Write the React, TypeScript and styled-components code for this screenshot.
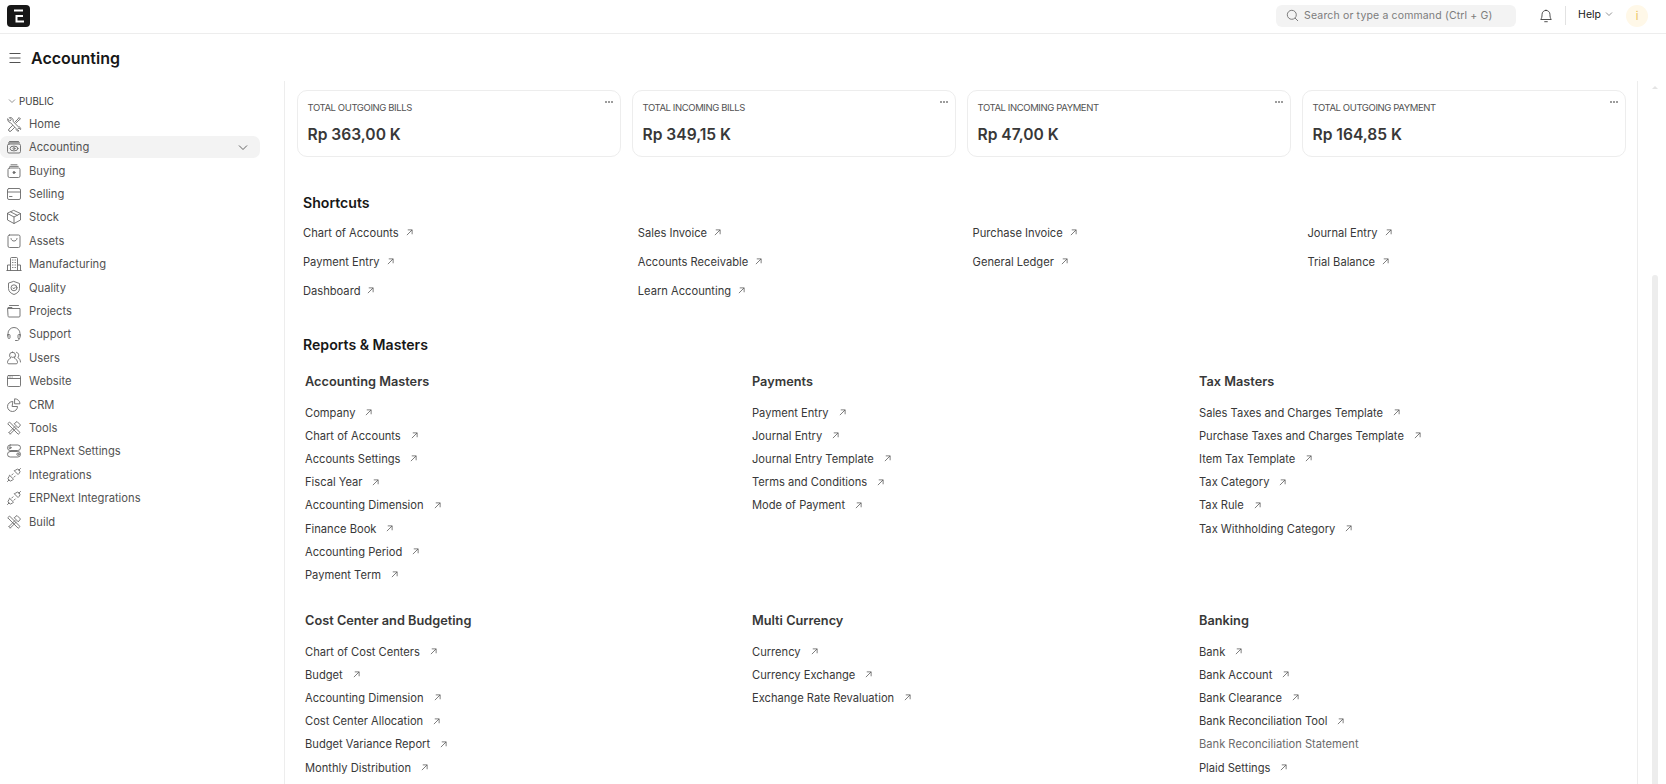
import React from "react";
import styled, { createGlobalStyle } from "styled-components";

const GlobalStyle = createGlobalStyle`
  html, body {
    margin: 0;
    padding: 0;
    height: 784px;
    overflow: hidden;
    background: #fff;
    font-family: Inter, "Noto Sans", sans-serif;
    color: #383838;
  }
`;

const Icon = styled.svg.attrs({ viewBox: "0 0 16 16", fill: "none" })`
  width: 16px;
  height: 16px;
  flex: none;
  stroke: #6a6a6a;
  stroke-width: 0.9;
  stroke-linecap: round;
  stroke-linejoin: round;
`;

const iconPaths: Record<string, React.ReactNode> = {
  tools: (
    <path d="M2 3.5L3.5 2 14 12.5 12.5 14zM3 12.5l6-6M4.3 14l6-6M3 12.5L4.3 14M8.5 3.5L11 1.5 14.5 5l-2 2.5z" />
  ),
  home: (
    <path d="M1.8 3.2l2 2 1.5-1.5-2-2a3 3 0 0 1 3.8 3.8l5.2 5.200a2.200 2.200 0 0 1 2.300 2.800l-1.800-1.500-1.400 1.500 1.500 1.500a2.200 2.200 0 0 1-2.800-2.400L4.600 6.800a3 3 0 0 1-2.800-3.600zM9 6l3-3 1-1.500L14.500 3l-1.500 1-3 3M6.500 9.500L3 13a1.400 1.400 0 0 0 2 2l3.500-3.500" />
  ),
  accounting: (
    <>
      <rect x="1.5" y="5" width="13" height="9" rx="1.5" />
      <path d="M3.5 2.5h9M2.5 3.8h11" />
      <ellipse cx="8" cy="9.5" rx="4" ry="2.4" />
      <circle cx="8" cy="9.5" r="1" />
    </>
  ),
  buying: (
    <>
      <rect x="2" y="5" width="12" height="9.5" rx="1.5" />
      <path d="M5 1.8h6M3.8 3.4h8.4" />
      <circle cx="8" cy="9.5" r="1" fill="#6a6a6a" />
    </>
  ),
  selling: (
    <>
      <rect x="1.5" y="2.5" width="13" height="11" rx="1.5" />
      <path d="M1.5 6h13M3.5 10.5h2.5" />
    </>
  ),
  stock: (
    <path d="M8 1.5l6.5 3v6.5L8 14.5 1.5 11V4.5zM1.5 4.5L8 8l6.5-3.5M8 8v6.5M4.8 3l6.5 3.3" />
  ),
  assets: (
    <>
      <rect x="2" y="2" width="12" height="12.5" rx="1.5" />
      <path d="M5 5.5c.3 3.5 5.7 3.5 6 0" />
    </>
  ),
  manufacturing: (
    <path d="M4.5 14.5V2.5c0-.6.4-1 1-1h5c.6 0 1 .4 1 1v12M1.5 14.5V9h3M11.5 9h3v5.5M.8 14.5h14.4M6.5 4h.5M9 4h.5M6.5 6.5h.5M9 6.5h.5M6.5 9h.5M9 9h.5M6.5 11.5h.5M9 11.5h.5" />
  ),
  quality: (
    <>
      <path d="M8 1.5l5.5 2v5c0 3-2.5 5-5.5 6-3-1-5.5-3-5.5-6v-5z" />
      <circle cx="8" cy="7.8" r="3" />
      <path d="M7 8l1 .8 1.4-1.8" />
    </>
  ),
  projects: (
    <path d="M3.5 2.5h9M2 5.5h12v7.5c0 .6-.4 1-1 1H3c-.6 0-1-.4-1-1zM2 5.5V4.5h4l1 1" />
  ),
  support: (
    <path d="M2 10V7.5a6 6 0 0 1 12 0V10M2 8.5h1.2c.5 0 .8.3.8.8v2.4c0 .5-.3.8-.8.8h-.4c-.5 0-.8-.3-.8-.8zM14 8.5h-1.2c-.5 0-.8.3-.8.8v2.4c0 .5.3.8.8.8h.4c.5 0 .8-.3.8-.8zM13 12.5v.5c0 1-.7 1.5-1.5 1.5H9.5" />
  ),
  users: (
    <path d="M6.5 2.2a3 3 0 0 0-3 3c0 1.2.5 2.2 1.3 2.8C3 8.8 1.5 10.5 1.5 12.5c0 .8.5 1.3 1.3 1.3h7.4c.8 0 1.3-.5 1.3-1.3 0-2-1.5-3.7-3.300-4.500.8-.6 1.300-1.600 1.300-2.800a3 3 0 0 0-3-3zM10.500 2.300c2.200.3 3 3.500 1.300 5.200 1.700 1 2.700 2.700 2.700 4.500M5 6.500c1 1.300 2.500 1.300 3.500 0" />
  ),
  website: (
    <>
      <rect x="1.5" y="2.5" width="13" height="11" rx="1" />
      <path d="M1.5 5.5h13M3.2 4h.1M4.7 4h.1M6.2 4h.1" />
    </>
  ),
  crm: <path d="M6.5 4.5a5 5 0 1 0 5 5h-5zM9 1.8a5 5 0 0 1 5 5H9z" />,
  settings: (
    <>
      <rect x="1.5" y="2" width="13" height="5.5" rx="2.7" />
      <rect x="1.5" y="8.5" width="13" height="5.5" rx="2.7" />
      <circle cx="4" cy="4.7" r="1" />
      <circle cx="12" cy="11.2" r="1.2" />
    </>
  ),
  integrations: (
    <path d="M1.5 14.5L3 13M3.8 8.5l3.7 3.7-1.3 1a2.4 2.4 0 0 1-3.400-3.400zM5.800 8L7 6.800M8 10.200L9.200 9M8.500 4L12 7.500l1.200-1.200a2.400 2.400 0 0 0-3.400-3.400zM14.500 1.500l-1.700 1.700" />
  ),
};

const Page = styled.div`
  width: 1666px;
  height: 784px;
  display: flex;
  flex-direction: column;
  overflow: hidden;
`;

const Navbar = styled.header`
  height: 34px;
  flex: none;
  box-sizing: border-box;
  border-bottom: 1px solid #ededed;
  display: flex;
  align-items: center;
  padding: 0 18px 2px 7px;
`;

const Logo = styled.div`
  width: 23px;
  height: 22px;
  border-radius: 4px;
  background: #171717;
  display: flex;
  align-items: center;
  justify-content: center;
`;

const NavRight = styled.div`
  margin-left: auto;
  display: flex;
  align-items: center;
`;

const Search = styled.div`
  width: 240px;
  height: 22px;
  border-radius: 6px;
  background: #f3f3f3;
  display: flex;
  align-items: center;
  gap: 5px;
  padding: 0 0 1px 10px;
  box-sizing: border-box;
  font-size: 10.5px;
  letter-spacing: 0.15px;
  color: #7c7c7c;
`;

const Bell = styled.svg.attrs({ viewBox: "0 0 16 16", fill: "none" })`
  width: 14px;
  height: 14px;
  margin-left: 23px;
  stroke: #383838;
  stroke-width: 1;
  stroke-linecap: round;
  stroke-linejoin: round;
`;

const NavDivider = styled.div`
  width: 1px;
  height: 19px;
  background: #e2e2e2;
  margin: 0 12px;
`;

const HelpLabel = styled.div`
  font-size: 10.5px;
  color: #171717;
  display: flex;
  align-items: center;
  gap: 4px;
  margin-top: -3px;
`;

const Avatar = styled.div`
  width: 22px;
  height: 22px;
  border-radius: 50%;
  background: #fff8e8;
  color: #e9c15b;
  font-size: 11px;
  display: flex;
  align-items: center;
  justify-content: center;
  margin-left: 13px;
`;

const PageHead = styled.div`
  height: 47px;
  flex: none;
  display: flex;
  align-items: center;
  padding-left: 9px;
  gap: 10px;
  box-sizing: border-box;
`;

const PageTitle = styled.h1`
  margin: 0;
  font-size: 16px;
  font-weight: 600;
  color: #171717;
`;

const Body = styled.div`
  flex: 1;
  display: flex;
  min-height: 0;
`;

const Sidebar = styled.aside`
  width: 284px;
  flex: none;
  box-sizing: border-box;
  padding-top: 13px;
`;

const GroupLabel = styled.div`
  display: flex;
  align-items: center;
  gap: 3px;
  height: 14px;
  padding-left: 8px;
  font-size: 9.7px;
  font-weight: 400;
  color: #383838;
  margin-bottom: 4.2px;
`;

const SideRow = styled.div`
  height: 23.4px;
  display: flex;
  align-items: center;
`;

const SideItem = styled.div<{ $active?: boolean }>`
  width: 260px;
  height: 22px;
  flex: none;
  display: flex;
  align-items: center;
  box-sizing: border-box;
  padding: 0 12px 0 6px;
  gap: 7px;
  font-size: 11.2px;
  color: #525252;
  border-radius: 7px;
  background: ${(p) => (p.$active ? "#f3f3f3" : "transparent")};
`;

const SideCaret = styled.svg.attrs({ viewBox: "0 0 10 7", fill: "none" })`
  width: 10px;
  height: 7px;
  margin-left: auto;
  stroke: #525252;
  stroke-width: 0.9;
`;

const Main = styled.main`
  width: 1354px;
  flex: none;
  box-sizing: border-box;
  border-left: 1px solid #ededed;
  border-right: 1px solid #ededed;
  padding: 9px 12px 0 12px;
  overflow: hidden;
`;

const Cards = styled.div`
  display: grid;
  grid-template-columns: repeat(4, 323.75px);
  gap: 11.25px;
`;

const Card = styled.div`
  position: relative;
  height: 67px;
  box-sizing: border-box;
  border: 1px solid #ededed;
  border-radius: 10px;
  padding: 11px 10px 0 9.5px;
`;

const CardLabel = styled.div`
  font-size: 9.5px;
  letter-spacing: -0.4px;
  line-height: 12px;
  color: #525252;
`;

const CardValue = styled.div`
  font-size: 15.6px;
  line-height: 20px;
  font-weight: 600;
  color: #383838;
  margin-top: 11px;
`;

const CardMenu = styled.div`
  position: absolute;
  top: 10px;
  right: 7px;
  display: flex;
  gap: 1.5px;
  & > i {
    width: 1.5px;
    height: 1.5px;
    background: #8a8a8a;
    border-radius: 50%;
  }
`;

const SectionTitle = styled.h2<{ $top: number }>`
  margin: ${(p) => p.$top}px 0 0;
  padding-left: 6px;
  font-size: 14.1px;
  line-height: 18px;
  font-weight: 600;
  color: #171717;
`;

const ShortcutGrid = styled.div`
  display: grid;
  grid-template-columns: repeat(4, 334.8px);
  grid-auto-rows: 29px;
  padding-left: 6px;
  margin-top: 6px;
`;

const LinkText = styled.div<{ $disabled?: boolean }>`
  display: flex;
  align-items: center;
  font-size: 11.15px;
  color: ${(p) => (p.$disabled ? "#6b6b6b" : "#383838")};
`;

const ArrowIcon = styled.svg.attrs({ viewBox: "0 0 8 8", fill: "none" })<{ $gap: number }>`
  width: 7px;
  height: 7px;
  margin-left: ${(p) => p.$gap}px;
  stroke: #5c5c5c;
  stroke-width: 0.9;
`;

const ReportGrid = styled.div`
  display: grid;
  grid-template-columns: repeat(3, 447px);
  padding-left: 8px;
  margin-top: 19px;
`;

const ReportCol = styled.div`
  height: 239px;
`;

const ColTitle = styled.h3`
  margin: 0 0 10px;
  font-size: 12.75px;
  line-height: 18px;
  font-weight: 600;
  color: #383838;
`;

const ReportRow = styled(LinkText)`
  height: 23.2px;
`;

const ScrollGutter = styled.div`
  position: relative;
  flex: 1;
`;

const ScrollArrow = styled.div`
  position: absolute;
  top: 5px;
  left: 14px;
  width: 0;
  height: 0;
  border: 3px solid transparent;
  border-bottom: 3px solid #e4e4e4;
  border-top: 0;
`;

const ScrollThumb = styled.div`
  position: absolute;
  top: 194px;
  bottom: 0;
  left: 14px;
  width: 6px;
  background: #ededed;
  border-radius: 3px 3px 0 0;
`;

const Arrow = ({ gap = 7 }: { gap?: number }) => (
  <ArrowIcon $gap={gap}>
    <path d="M1 7l6-6M2 1h5v5" />
  </ArrowIcon>
);

const sideItems: [string, string][] = [
  ["Home", "home"],
  ["Accounting", "accounting"],
  ["Buying", "buying"],
  ["Selling", "selling"],
  ["Stock", "stock"],
  ["Assets", "assets"],
  ["Manufacturing", "manufacturing"],
  ["Quality", "quality"],
  ["Projects", "projects"],
  ["Support", "support"],
  ["Users", "users"],
  ["Website", "website"],
  ["CRM", "crm"],
  ["Tools", "tools"],
  ["ERPNext Settings", "settings"],
  ["Integrations", "integrations"],
  ["ERPNext Integrations", "integrations"],
  ["Build", "tools"],
];

const cards = [
  ["TOTAL OUTGOING BILLS", "Rp 363,00 K"],
  ["TOTAL INCOMING BILLS", "Rp 349,15 K"],
  ["TOTAL INCOMING PAYMENT", "Rp 47,00 K"],
  ["TOTAL OUTGOING PAYMENT", "Rp 164,85 K"],
];

const shortcuts = [
  "Chart of Accounts",
  "Sales Invoice",
  "Purchase Invoice",
  "Journal Entry",
  "Payment Entry",
  "Accounts Receivable",
  "General Ledger",
  "Trial Balance",
  "Dashboard",
  "Learn Accounting",
];

const reports: { title: string; links: string[] }[] = [
  {
    title: "Accounting Masters",
    links: ["Company", "Chart of Accounts", "Accounts Settings", "Fiscal Year", "Accounting Dimension", "Finance Book", "Accounting Period", "Payment Term"],
  },
  {
    title: "Payments",
    links: ["Payment Entry", "Journal Entry", "Journal Entry Template", "Terms and Conditions", "Mode of Payment"],
  },
  {
    title: "Tax Masters",
    links: ["Sales Taxes and Charges Template", "Purchase Taxes and Charges Template", "Item Tax Template", "Tax Category", "Tax Rule", "Tax Withholding Category"],
  },
  {
    title: "Cost Center and Budgeting",
    links: ["Chart of Cost Centers", "Budget", "Accounting Dimension", "Cost Center Allocation", "Budget Variance Report", "Monthly Distribution"],
  },
  {
    title: "Multi Currency",
    links: ["Currency", "Currency Exchange", "Exchange Rate Revaluation"],
  },
  {
    title: "Banking",
    links: ["Bank", "Bank Account", "Bank Clearance", "Bank Reconciliation Tool", "Bank Reconciliation Statement", "Plaid Settings"],
  },
];

export default function App() {
  return (
    <Page>
      <GlobalStyle />
      <Navbar>
        <Logo>
          <svg width="12" height="14" viewBox="0 0 12 14" fill="none" stroke="#fff" strokeWidth="2">
            <path d="M1 1.5h9M10 7H3.5v5.5H11" />
          </svg>
        </Logo>
        <NavRight>
          <Search>
            <svg width="13" height="13" viewBox="0 0 13 13" fill="none" stroke="#7c7c7c" strokeWidth="1">
              <circle cx="5.8" cy="5.8" r="4.5" />
              <path d="M9 9l3 3" />
            </svg>
            Search or type a command (Ctrl + G)
          </Search>
          <Bell>
            <path d="M8 1.5a4.5 4.5 0 0 0-4.5 4.5c0 3-.5 4.5-1.5 6h12c-1-1.5-1.5-3-1.5-6A4.5 4.5 0 0 0 8 1.5zM6.5 14.5h3" />
          </Bell>
          <NavDivider />
          <HelpLabel>
            Help
            <svg width="8" height="6" viewBox="0 0 8 6" fill="none" stroke="#777" strokeWidth="0.8">
              <path d="M1 1.5l3 3 3-3" />
            </svg>
          </HelpLabel>
          <Avatar>i</Avatar>
        </NavRight>
      </Navbar>
      <PageHead>
        <svg width="12" height="12" viewBox="0 0 12 12" fill="none" stroke="#525252" strokeWidth="1">
          <path d="M.5 1.5h11M.5 6h11M.5 10.5h11" />
        </svg>
        <PageTitle>Accounting</PageTitle>
      </PageHead>
      <Body>
        <Sidebar>
          <GroupLabel>
            <svg width="8" height="6" viewBox="0 0 8 6" fill="none" stroke="#777" strokeWidth="0.8">
              <path d="M1 1.5l3 3 3-3" />
            </svg>
            PUBLIC
          </GroupLabel>
          {sideItems.map(([label, icon]) => (
            <SideRow key={label}>
              <SideItem $active={label === "Accounting"}>
                <Icon>{iconPaths[icon]}</Icon>
                {label}
                {label === "Accounting" && (
                  <SideCaret>
                    <path d="M1 1.5l4 4 4-4" />
                  </SideCaret>
                )}
              </SideItem>
            </SideRow>
          ))}
        </Sidebar>
        <Main>
          <Cards>
            {cards.map(([label, value]) => (
              <Card key={label}>
                <CardLabel>{label}</CardLabel>
                <CardValue>{value}</CardValue>
                <CardMenu>
                  <i />
                  <i />
                  <i />
                </CardMenu>
              </Card>
            ))}
          </Cards>
          <SectionTitle $top={37}>Shortcuts</SectionTitle>
          <ShortcutGrid>
            {shortcuts.map((s) => (
              <LinkText key={s}>
                {s}
                <Arrow />
              </LinkText>
            ))}
          </ShortcutGrid>
          <SectionTitle $top={31}>Reports &amp; Masters</SectionTitle>
          <ReportGrid>
            {reports.map((r) => (
              <ReportCol key={r.title}>
                <ColTitle>{r.title}</ColTitle>
                {r.links.map((l) => (
                  <ReportRow key={l} $disabled={l === "Bank Reconciliation Statement"}>
                    {l}
                    {l !== "Bank Reconciliation Statement" && <Arrow gap={10} />}
                  </ReportRow>
                ))}
              </ReportCol>
            ))}
          </ReportGrid>
        </Main>
        <ScrollGutter>
          <ScrollArrow />
          <ScrollThumb />
        </ScrollGutter>
      </Body>
    </Page>
  );
}
